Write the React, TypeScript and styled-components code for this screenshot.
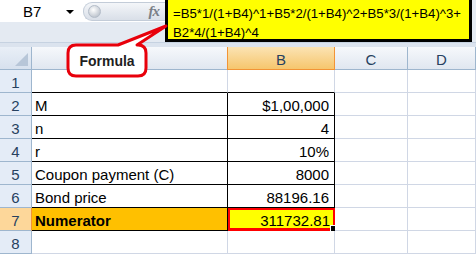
import React from 'react'
import styled, { createGlobalStyle, css } from 'styled-components'

const GlobalStyle = createGlobalStyle`
  html, body {
    margin: 0;
    padding: 0;
    background: #ffffff;
    overflow: hidden;
  }
  body {
    font-family: 'Liberation Sans', Arial, sans-serif;
  }
`

const Page = styled.div`
  position: relative;
  width: 476px;
  height: 256px;
  overflow: hidden;
  background: #ffffff;
`

const FormulaBar = styled.div`
  display: flex;
  height: 42px;
  background: #e4eaf2;
`

const LeftPane = styled.div`
  width: 165px;
  display: flex;
  flex-direction: column;
`

const NameRow = styled.div`
  height: 22px;
  display: flex;
  align-items: center;
  background: #ffffff;
`

const NameBox = styled.div`
  width: 83px;
  height: 22px;
  display: flex;
  align-items: center;
  position: relative;
  font-size: 15px;
  color: #000;
  padding-left: 23px;
  box-sizing: border-box;
`

const DropArrow = styled.span`
  position: absolute;
  left: 66px;
  top: 10px;
  width: 0;
  height: 0;
  border-left: 4px solid transparent;
  border-right: 4px solid transparent;
  border-top: 4px solid #000;
`

const FuncPill = styled.div`
  flex: 1;
  height: 17px;
  display: flex;
  align-items: center;
  justify-content: space-between;
  padding: 0 4px 0 4px;
  border-radius: 9px 0 0 9px;
  background: linear-gradient(#f4f6f9, #d9dfe8);
  border: 1px solid #c3ccd8;
  border-right: none;
`

const Knob = styled.span`
  width: 11px;
  height: 11px;
  border-radius: 50%;
  background: radial-gradient(circle at 40% 35%, #ffffff, #aab3bf);
  border: 1px solid #b3bcc8;
`

const Fx = styled.span`
  font-family: 'Liberation Serif', 'Times New Roman', serif;
  font-style: italic;
  font-weight: bold;
  font-size: 15px;
  color: #7a7f87;
  letter-spacing: -1px;
  margin-right: 2px;
`

const FormulaBox = styled.div`
  flex: 1;
  margin-right: 4px;
  background: #ffff00;
  border: 3px solid #000;
  border-top: none;
  padding: 5px 0 0 5px;
  font-size: 13.2px;
  line-height: 18.5px;
  color: #000;
  white-space: nowrap;
`

const Divider = styled.div`
  height: 5px;
  background: #dbe3ee;
  border-top: 1px solid #c6d2e1;
  box-sizing: border-box;
`

const Grid = styled.div`
  display: grid;
  grid-template-columns: 32px 196px 107px 73px 1fr;
  grid-auto-rows: 23px;
`

const cellText = css`
  box-sizing: border-box;
  font-size: 15px;
  line-height: 25px;
  height: 23px;
  white-space: nowrap;
`

const Corner = styled.div`
  ${cellText};
  position: relative;
  background: linear-gradient(#e9eff7, #d7e1ee);
  border-right: 1px solid #9eb6ce;
  border-bottom: 1px solid #9eb6ce;
  &::after {
    content: '';
    position: absolute;
    right: 3px;
    bottom: 3px;
    width: 0;
    height: 0;
    border-left: 13px solid transparent;
    border-bottom: 13px solid #b7c6d8;
  }
`

const ColHeader = styled.div<{ $active?: boolean }>`
  ${cellText};
  text-align: center;
  color: #27415f;
  background: ${p =>
    p.$active
      ? 'linear-gradient(#fbe3b3, #f6c66d)'
      : 'linear-gradient(#f6f8fb, #e0e7f0)'};
  border-right: 1px solid ${p => (p.$active ? '#f29436' : '#9eb6ce')};
  border-bottom: 1px solid ${p => (p.$active ? '#f29436' : '#9eb6ce')};
  ${p => p.$active && 'border-left: 1px solid #f29436; margin-left: -1px;'}
`

const RowHeader = styled.div<{ $active?: boolean }>`
  ${cellText};
  text-align: center;
  color: #27415f;
  background: ${p => (p.$active ? '#fdd79a' : '#e4ecf7')};
  border-right: 1px solid ${p => (p.$active ? '#f29436' : '#9eb6ce')};
  border-bottom: 1px solid #9eb6ce;
`

type CellProps = {
  $right?: boolean
  $boxed?: boolean
  $fill?: string
  $bold?: boolean
  $selected?: boolean
}

const Cell = styled.div<CellProps>`
  ${cellText};
  position: relative;
  color: #000;
  padding: 0 ${p => (p.$right ? '5px' : '3px')};
  text-align: ${p => (p.$right ? 'right' : 'left')};
  background: ${p => p.$fill || '#ffffff'};
  font-weight: ${p => (p.$bold ? 'bold' : 'normal')};
  border-right: 1px solid ${p => (p.$boxed ? '#000' : '#d0d7e5')};
  border-bottom: 1px solid ${p => (p.$boxed ? '#000' : '#d0d7e5')};
  ${p =>
    p.$selected &&
    css`
      border: 2px solid #ff0000;
      border-bottom-width: 3px;
      line-height: 22px;
      padding-right: 3px;
    `}
`

const FillHandle = styled.span`
  position: absolute;
  right: -4px;
  bottom: -4px;
  width: 5px;
  height: 5px;
  background: #000;
  border: 1px solid #fff;
`

const Callout = styled.div`
  position: absolute;
  left: 60px;
  top: 20px;
  width: 115px;
  height: 62px;
`

const CalloutLabel = styled.div`
  position: absolute;
  left: 8px;
  top: 25px;
  width: 78px;
  height: 31px;
  display: flex;
  align-items: center;
  justify-content: center;
  font-size: 14px;
  font-weight: bold;
  color: #1e1e1e;
`

const rows: { a: string; b: string }[] = [
  { a: '', b: '' },
  { a: 'M', b: '$1,00,000' },
  { a: 'n', b: '4' },
  { a: 'r', b: '10%' },
  { a: 'Coupon payment (C)', b: '8000' },
  { a: 'Bond price', b: '88196.16' },
  { a: 'Numerator', b: '311732.81' },
  { a: '', b: '' },
]

export default function App() {
  return (
    <Page>
      <GlobalStyle />
      <FormulaBar>
        <LeftPane>
          <NameRow>
            <NameBox>
              B7
              <DropArrow />
            </NameBox>
            <FuncPill>
              <Knob />
              <Fx>fx</Fx>
            </FuncPill>
          </NameRow>
        </LeftPane>
        <FormulaBox>
          =B5*1/(1+B4)^1+B5*2/(1+B4)^2+B5*3/(1+B4)^3+
          <br />
          B2*4/(1+B4)^4
        </FormulaBox>
      </FormulaBar>
      <Divider />
      <Grid>
        <Corner />
        {/* column A's letter sits under the callout in the reference */}
        <ColHeader />
        <ColHeader $active>B</ColHeader>
        <ColHeader>C</ColHeader>
        <ColHeader>D</ColHeader>
        {rows.map((r, i) => {
          const n = i + 1
          const boxed = n <= 7
          const current = n === 7
          const edge = n === 1 ? { borderRight: '1px solid #d0d7e5' } : undefined
          return (
            <React.Fragment key={n}>
              <RowHeader $active={current}>{n}</RowHeader>
              <Cell
                $boxed={boxed}
                $fill={current ? '#ffc000' : undefined}
                $bold={current}
                style={edge}
              >
                {r.a}
              </Cell>
              <Cell
                $right
                $boxed={boxed}
                $selected={current}
                $fill={current ? '#ffff00' : undefined}
                style={edge}
              >
                {r.b}
                {current && <FillHandle />}
              </Cell>
              <Cell />
              <Cell />
            </React.Fragment>
          )
        })}
      </Grid>
      <Callout>
        <svg width="115" height="62" viewBox="60 20 115 62">
          <path
            d="M76 45 L118 45 L166 26 L137 45 L138 45 Q146 45 146 53 L146 68 Q146 76 138 76 L76 76 Q68 76 68 68 L68 53 Q68 45 76 45 Z"
            fill="#ffffff"
            stroke="#e8000b"
            strokeWidth="3"
            strokeLinejoin="round"
          />
        </svg>
        <CalloutLabel>Formula</CalloutLabel>
      </Callout>
    </Page>
  )
}
